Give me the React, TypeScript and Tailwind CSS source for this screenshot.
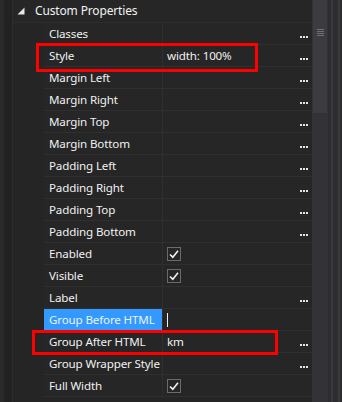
import React from "react";

type Row = { name: string; value?: string; check?: boolean; dots?: boolean; selected?: boolean; cursor?: boolean };

const rows: Row[] = [
  { name: "Classes", dots: true },
  { name: "Style", value: "width: 100%", dots: true },
  { name: "Margin Left", dots: true },
  { name: "Margin Right", dots: true },
  { name: "Margin Top", dots: true },
  { name: "Margin Bottom", dots: true },
  { name: "Padding Left", dots: true },
  { name: "Padding Right", dots: true },
  { name: "Padding Top", dots: true },
  { name: "Padding Bottom", dots: true },
  { name: "Enabled", check: true },
  { name: "Visible", check: true },
  { name: "Label", dots: true },
  { name: "Group Before HTML", selected: true, cursor: true },
  { name: "Group After HTML", value: "km", dots: true },
  { name: "Group Wrapper Style", dots: true },
  { name: "Full Width", check: true },
];

function Check() {
  return (
    <div className="w-[14px] h-[14px] border border-[#6b6b6b] flex items-center justify-center">
      <svg width="12" height="12" viewBox="0 0 12 12">
        <path d="M2 6.5 L4.8 9.2 L10 2.8" stroke="#f0f0f0" strokeWidth="1.6" fill="none" />
      </svg>
    </div>
  );
}

function Dots() {
  return (
    <div className="flex gap-[1px] items-end h-[10px] pb-[1px]">
      <div className="w-[2px] h-[2px] bg-[#e8e8e8]" />
      <div className="w-[2px] h-[2px] bg-[#e8e8e8]" />
      <div className="w-[2px] h-[2px] bg-[#e8e8e8]" />
    </div>
  );
}

export default function App() {
  return (
    <div
      className="relative w-[342px] h-[402px] bg-[#252526] flex overflow-hidden text-[11.6px] tracking-[-0.15px] text-[#f1f1f1]"
      style={{ fontFamily: '"Noto Sans", "Open Sans", sans-serif' }}
    >
      {/* left gutter */}
      <div className="w-[13px] shrink-0 flex">
        <div className="w-[4px] bg-[#2a2a2c]" />
        <div className="w-[8px] bg-[#222223]" />
        <div className="w-[1px] bg-[#2d2d30]" />
      </div>
      {/* content */}
      <div className="w-[299px] shrink-0 flex flex-col">
        <div className="h-[23px] shrink-0 flex items-center pl-[4px] border-b border-[#2d2d2d] bg-[#262627]">
          <svg width="8" height="8" viewBox="0 0 8 8" className="shrink-0">
            <path d="M7.5 0.5 L7.5 7.5 L0.5 7.5 Z" fill="#e6e6e6" />
          </svg>
          <span className="ml-[10px] whitespace-nowrap text-[12px]">Custom Properties</span>
        </div>
        {rows.map((r) => (
          <div key={r.name} className="h-[22px] flex shrink-0">
            <div className="w-[31px] shrink-0 bg-[#252526]" />
            <div
              className={
                "w-[119px] shrink-0 flex items-center pl-[5px] border-b border-r border-[#2f2f2f] overflow-hidden " +
                (r.selected ? "bg-[#3399ff] text-[#eaf3ff]" : "bg-[#262626]")
              }
            >
              <span className="whitespace-nowrap">{r.name}</span>
            </div>
            <div className="flex-1 flex items-center pl-[4px] pr-[4px] border-b border-[#2f2f2f] bg-[#262626]">
              <div className="flex-1 flex items-center">
                {r.check && <Check />}
                {r.value && <span className="whitespace-nowrap">{r.value}</span>}
                {r.cursor && <div className="w-[1px] h-[14px] bg-[#f0f0f0]" />}
              </div>
              {r.dots && <Dots />}
            </div>
          </div>
        ))}
      </div>
      {/* scrollbar */}
      <div className="w-[16px] shrink-0 bg-[#333337] flex flex-col">
        <div className="mx-[1px] h-[113px] bg-[#3c3c40] flex flex-col items-center pt-[29px] gap-[1px]">
          <div className="w-[7px] h-[1px] bg-[#707074]" />
          <div className="w-[7px] h-[1px] bg-[#707074]" />
          <div className="w-[7px] h-[1px] bg-[#707074]" />
          <div className="w-[7px] h-[1px] bg-[#707074]" />
        </div>
      </div>
      {/* right strips */}
      <div className="w-[14px] shrink-0 flex">
        <div className="w-[3px] bg-[#2d2d30]" />
        <div className="w-[2px] bg-[#3a3a3d]" />
        <div className="w-[5px] bg-[#2d2d30]" />
        <div className="w-[2px] bg-[#3a3a3d]" />
        <div className="w-[2px] bg-[#2d2d30]" />
      </div>
      {/* red highlight boxes */}
      <div className="absolute left-[36px] top-[43px] w-[222px] h-[29px] border-[3px] border-[#ff0000]" />
      <div className="absolute left-[32px] top-[330px] w-[246px] h-[25px] border-[3px] border-[#ff0000]" />
    </div>
  );
}
